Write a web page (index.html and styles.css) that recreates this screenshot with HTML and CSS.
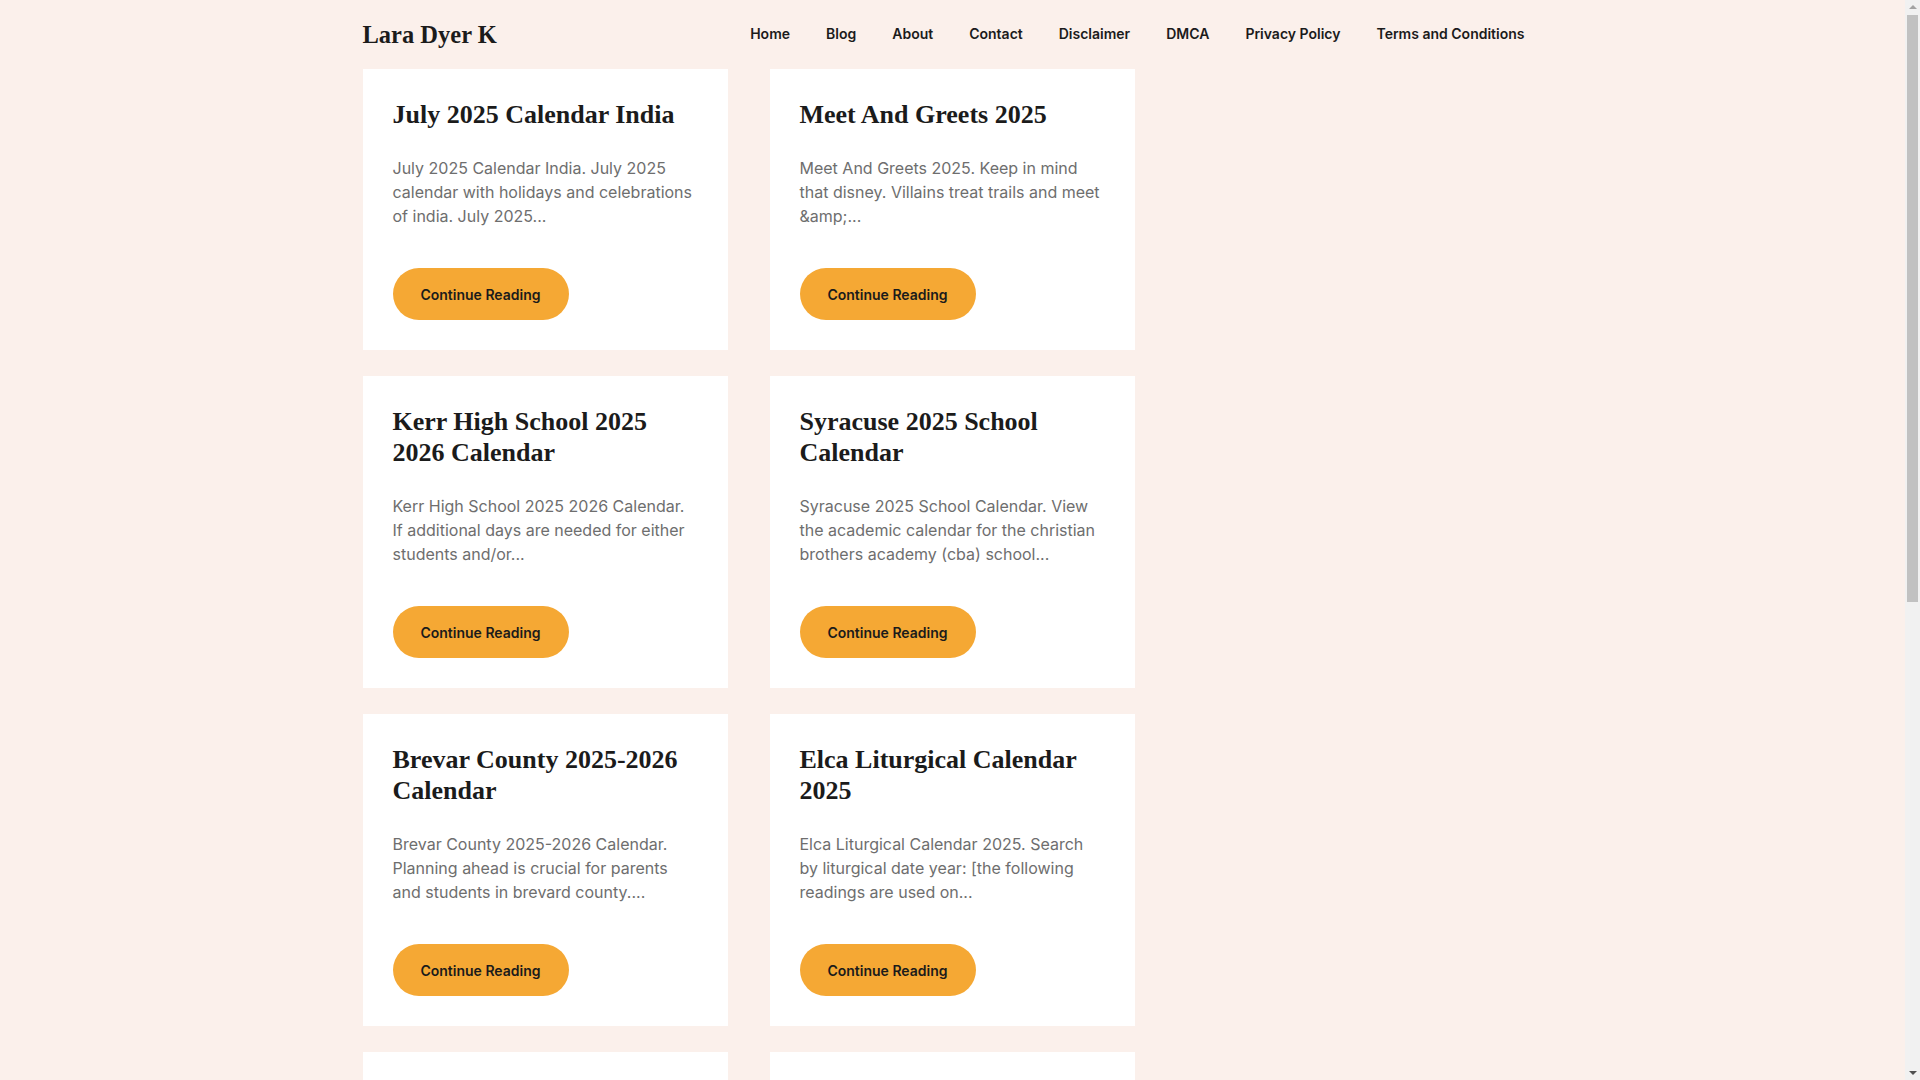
FILE: index.html
```html
<!DOCTYPE html>
<html lang="en">
<head>
<meta charset="utf-8">
<title>Lara Dyer K</title>
<link rel="stylesheet" href="styles.css">
</head>
<body>
<div class="page">
<header class="site-header">
  <div class="header-inner">
    <div class="site-title">Lara Dyer K</div>
    <nav class="main-nav">
      <a href="#">Home</a>
      <a href="#">Blog</a>
      <a href="#">About</a>
      <a href="#">Contact</a>
      <a href="#">Disclaimer</a>
      <a href="#">DMCA</a>
      <a href="#">Privacy Policy</a>
      <a href="#">Terms and Conditions</a>
    </nav>
  </div>
</header>
<div class="site-content">
  <main class="posts">
    <article class="card">
      <h2 class="card-title">July 2025 Calendar India</h2>
      <p class="card-text">July 2025 Calendar India. July 2025 calendar with holidays and celebrations of india. July 2025...</p>
      <a class="btn" href="#">Continue Reading</a>
    </article>
    <article class="card">
      <h2 class="card-title">Meet And Greets 2025</h2>
      <p class="card-text">Meet And Greets 2025. Keep in mind that disney. Villains treat trails and meet &amp;amp;...</p>
      <a class="btn" href="#">Continue Reading</a>
    </article>
    <article class="card">
      <h2 class="card-title">Kerr High School 2025 2026 Calendar</h2>
      <p class="card-text">Kerr High School 2025 2026 Calendar. If additional days are needed for either students and/or...</p>
      <a class="btn" href="#">Continue Reading</a>
    </article>
    <article class="card">
      <h2 class="card-title">Syracuse 2025 School Calendar</h2>
      <p class="card-text">Syracuse 2025 School Calendar. View the academic calendar for the christian brothers academy (cba) school...</p>
      <a class="btn" href="#">Continue Reading</a>
    </article>
    <article class="card">
      <h2 class="card-title">Brevar County 2025-2026 Calendar</h2>
      <p class="card-text">Brevar County 2025-2026 Calendar. Planning ahead is crucial for parents and students in brevard county....</p>
      <a class="btn" href="#">Continue Reading</a>
    </article>
    <article class="card">
      <h2 class="card-title">Elca Liturgical Calendar 2025</h2>
      <p class="card-text">Elca Liturgical Calendar 2025. Search by liturgical date year: [the following readings are used on...</p>
      <a class="btn" href="#">Continue Reading</a>
    </article>
    <article class="card card-empty"></article>
    <article class="card card-empty"></article>
  </main>
  <aside class="sidebar"></aside>
</div>
</div>
<div class="scrollbar" aria-hidden="true">
  <span class="sb-up"></span>
  <span class="sb-thumb"></span>
  <span class="sb-down"></span>
</div>
</body>
</html>
```
FILE: styles.css
```css
html, body {
  margin: 0;
  padding: 0;
}
html {
  height: 100%;
  overflow: hidden;
}
body {
  height: 100%;
  overflow: hidden;
  background: #fbf0eb;
  font-family: Inter, "Noto Sans", sans-serif;
  color: #1b1b1b;
}
.page {
  margin-right: 15px;
}
.site-header {
  height: 69px;
}
.header-inner {
  max-width: 1180px;
  margin: 0 auto;
  height: 100%;
  display: flex;
  align-items: center;
  justify-content: space-between;
}
.site-title {
  font-family: "Liberation Serif", "DejaVu Serif", serif;
  font-weight: 700;
  font-size: 24.5px;
  line-height: 1;
  color: #1b1b1b;
  margin-top: 1px;
}
.main-nav {
  display: flex;
  margin-top: -2px;
}
.main-nav a {
  font-size: 14px;
  font-weight: 600;
  color: #1b1b1b;
  text-decoration: none;
  padding: 0 18px;
  line-height: 20px;
}
.site-content {
  max-width: 1180px;
  margin: 0 auto;
  display: flex;
}
.posts {
  display: grid;
  grid-template-columns: 365px 365px;
  column-gap: 42px;
  row-gap: 26px;
  align-items: start;
  padding-bottom: 40px;
}
.card {
  background: #ffffff;
  padding: 30px;
  display: flex;
  flex-direction: column;
  align-items: flex-start;
}
.card-empty {
  height: 220px;
}
.card-title {
  font-family: "Liberation Serif", "DejaVu Serif", serif;
  font-weight: 700;
  font-size: 26px;
  line-height: 31px;
  margin: 0 0 26px;
  color: #1b1b1b;
}
.card-text {
  margin: 0 0 40px;
  font-size: 16px;
  line-height: 24px;
  color: #6e6e6e;
}
.btn {
  display: inline-flex;
  align-items: center;
  justify-content: center;
  width: 176px;
  height: 52px;
  border-radius: 26px;
  background: #f5a834;
  color: #1b1b1b;
  font-size: 14px;
  font-weight: 600;
  text-decoration: none;
}
.sidebar {
  flex: 1;
}
.scrollbar {
  position: fixed;
  top: 0;
  right: 0;
  width: 15px;
  height: 100vh;
  background: #f1f1f1;
  display: flex;
  flex-direction: column;
  align-items: center;
}
.sb-up, .sb-down {
  display: block;
  width: 0;
  height: 0;
  border-left: 4px solid transparent;
  border-right: 4px solid transparent;
  flex: none;
}
.sb-up {
  margin-top: 5px;
  border-bottom: 4px solid #a3a3a3;
}
.sb-down {
  margin-top: auto;
  margin-bottom: 5px;
  border-top: 4px solid #505050;
}
.sb-thumb {
  display: block;
  width: 11px;
  height: 587px;
  margin-top: 6px;
  background: #c1c1c1;
  flex: none;
}
```
